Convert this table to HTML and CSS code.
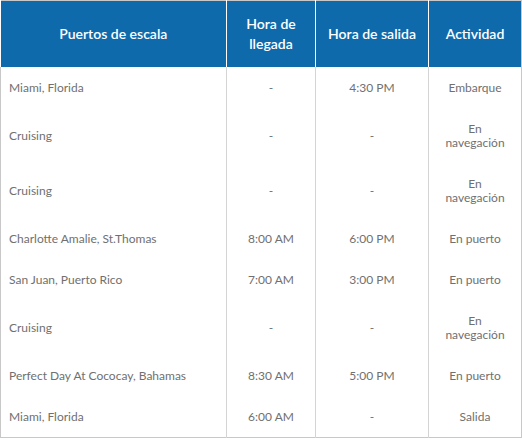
FILE: index.html
```html
<!DOCTYPE html>
<html lang="es">
<head>
<meta charset="utf-8">
<link rel="stylesheet" href="styles.css">
</head>
<body>
<table class="itinerary">
  <colgroup>
    <col class="c1"><col class="c2"><col class="c3"><col class="c4">
  </colgroup>
  <thead>
    <tr>
      <th>Puertos de escala</th>
      <th>Hora de llegada</th>
      <th>Hora de salida</th>
      <th>Actividad</th>
    </tr>
  </thead>
  <tbody>
    <tr><td>Miami, Florida</td><td>-</td><td>4:30 PM</td><td>Embarque</td></tr>
    <tr><td>Cruising</td><td>-</td><td>-</td><td>En navegación</td></tr>
    <tr><td>Cruising</td><td>-</td><td>-</td><td>En navegación</td></tr>
    <tr><td>Charlotte Amalie, St.Thomas</td><td>8:00 AM</td><td>6:00 PM</td><td>En puerto</td></tr>
    <tr><td>San Juan, Puerto Rico</td><td>7:00 AM</td><td>3:00 PM</td><td>En puerto</td></tr>
    <tr><td>Cruising</td><td>-</td><td>-</td><td>En navegación</td></tr>
    <tr><td>Perfect Day At Cococay, Bahamas</td><td>8:30 AM</td><td>5:00 PM</td><td>En puerto</td></tr>
    <tr><td>Miami, Florida</td><td>6:00 AM</td><td>-</td><td>Salida</td></tr>
  </tbody>
</table>
</body>
</html>
```
FILE: styles.css
```css
html, body {
  margin: 0;
  padding: 0;
  background: #fff;
}
.itinerary {
  width: 521px;
  border-collapse: collapse;
  table-layout: fixed;
  font-family: Lato, "Liberation Sans", sans-serif;
  border: 1px solid #c8c8c8;
  border-left: none;
}
.c1 { width: 226px; }
.c2 { width: 89px; }
.c3 { width: 113px; }
.c4 { width: 93px; }
.itinerary th {
  background: #0f6aac;
  color: #fff;
  font-size: 14px;
  font-weight: 600;
  line-height: 20px;
  height: 40px;
  padding: 13px 6px;
  text-align: center;
  vertical-align: middle;
  border-left: 1px solid #fff;
}
.itinerary th:first-child { border-left: none; }
.itinerary td {
  color: #707070;
  font-size: 12px;
  font-weight: 400;
  line-height: 14px;
  padding: 13.5px 8px 13.5px;
  text-align: center;
  vertical-align: middle;
  border-left: 1px solid #d4d4d4;
}
.itinerary td:first-child {
  text-align: left;
  border-left: 1px solid #c8c8c8;
}
.itinerary td:last-child {
  padding-left: 14px;
  padding-right: 14px;
}
```
